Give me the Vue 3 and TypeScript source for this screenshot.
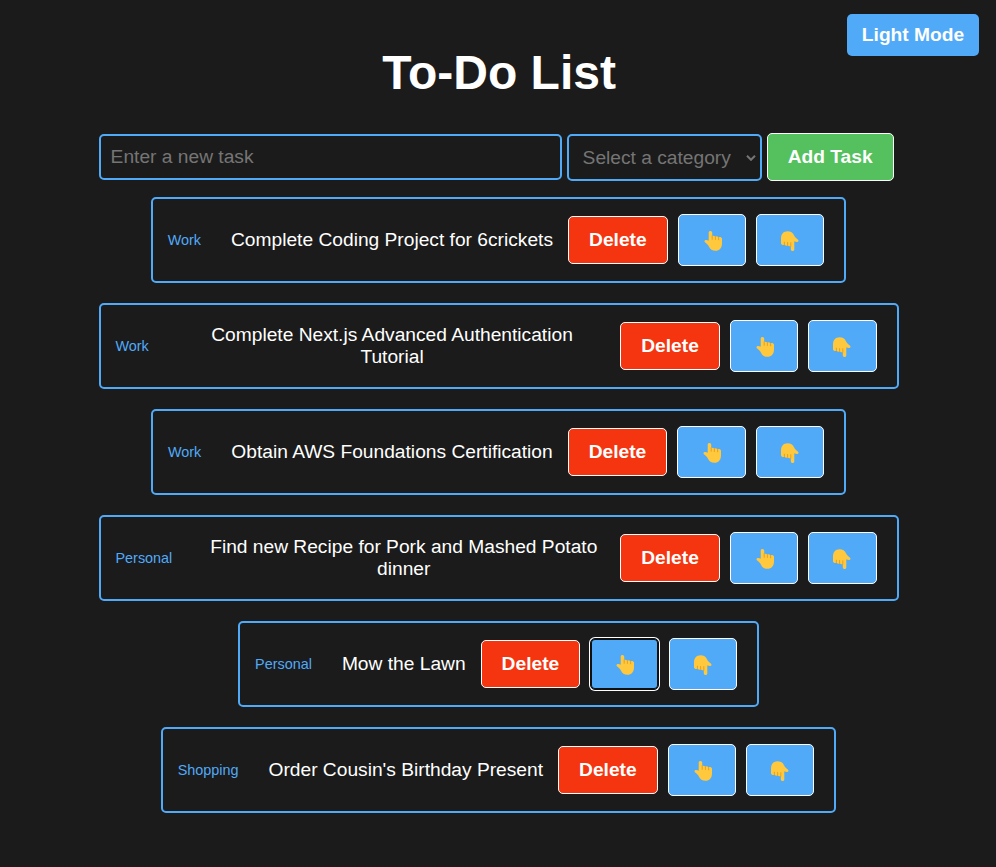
<script setup lang="ts">
import { ref } from 'vue'

interface Task {
  id: number
  category: string
  text: string
}

const newTask = ref('')
const category = ref('')
const focusedTask = ref(5)
const tasks = ref<Task[]>([
  { id: 1, category: 'Work', text: 'Complete Coding Project for 6crickets' },
  { id: 2, category: 'Work', text: 'Complete Next.js Advanced Authentication Tutorial' },
  { id: 3, category: 'Work', text: 'Obtain AWS Foundations Certification' },
  { id: 4, category: 'Personal', text: 'Find new Recipe for Pork and Mashed Potato dinner' },
  { id: 5, category: 'Personal', text: 'Mow the Lawn' },
  { id: 6, category: 'Shopping', text: "Order Cousin's Birthday Present" },
])

function addTask() {
  if (!newTask.value.trim() || !category.value) return
  tasks.value.push({ id: Date.now(), category: category.value, text: newTask.value })
  newTask.value = ''
}

function removeTask(index: number) {
  tasks.value.splice(index, 1)
}

function moveTask(index: number, step: number) {
  const target = index + step
  if (target < 0 || target >= tasks.value.length) return
  const [task] = tasks.value.splice(index, 1)
  tasks.value.splice(target, 0, task)
  focusedTask.value = task.id
}
</script>

<template>
  <div class="page">
    <button class="mode">Light Mode</button>
    <main class="todo">
      <h1>To-Do List</h1>
      <form class="entry" @submit.prevent="addTask">
        <input v-model="newTask" class="field" type="text" placeholder="Enter a new task" />
        <div class="select-wrap">
          <select v-model="category" class="select">
            <option value="">Select a category</option>
            <option>Work</option>
            <option>Personal</option>
            <option>Shopping</option>
          </select>
          <svg class="chevron" viewBox="0 0 10 6"><path d="M1 .8 5 4.8 9 .8" /></svg>
        </div>
        <button class="btn add">Add Task</button>
      </form>
      <ul class="tasks">
        <li v-for="(task, i) in tasks" :key="task.id" class="task">
          <span class="category">{{ task.category }}</span>
          <span class="text">{{ task.text }}</span>
          <button class="btn delete" @click="removeTask(i)">Delete</button>
          <button class="btn move" :class="{ focused: task.id === focusedTask }" aria-label="Move up" @click="moveTask(i, -1)">
            <svg class="hand up" viewBox="0 0 18 20">
              <path class="skin" d="M4.7 1.8C4.7.6 5.4 0 6.4 0s1.8.7 1.8 1.8v3.1c.9-.4 2.3-.2 3 .6 1.1-.5 2.5-.1 3 .6 1.7-.5 3.8 0 3.8 1.6v4.8c0 4.5-2.5 7.3-6.6 7.3-3.2 0-5.2-1.4-6.4-4.1-.8-1.8-2-2.7-3.8-4.2-1.1-.9-.9-2.2.3-2.5 1.3-.3 2.2.3 3.2.8z" />
              <path class="crease" d="M8.2 4.8v3.5M11.4 5.5v3M14.6 6.3v2.5" />
            </svg>
          </button>
          <button class="btn move" aria-label="Move down" @click="moveTask(i, 1)">
            <svg class="hand down" viewBox="0 0 18 20">
              <path class="skin" d="M4.7 1.8C4.7.6 5.4 0 6.4 0s1.8.7 1.8 1.8v3.1c.9-.4 2.3-.2 3 .6 1.1-.5 2.5-.1 3 .6 1.7-.5 3.8 0 3.8 1.6v4.8c0 4.5-2.5 7.3-6.6 7.3-3.2 0-5.2-1.4-6.4-4.1-.8-1.8-2-2.7-3.8-4.2-1.1-.9-.9-2.2.3-2.5 1.3-.3 2.2.3 3.2.8z" />
              <path class="crease" d="M8.2 4.8v3.5M11.4 5.5v3M14.6 6.3v2.5" />
            </svg>
          </button>
        </li>
      </ul>
    </main>
  </div>
</template>

<style>
body {
  margin: 0;
  background: #1b1b1b;
}
</style>

<style scoped>
.page {
  box-sizing: border-box;
  min-height: 867px;
  padding-left: 1.2px;
  background: #1b1b1b;
  color: #fff;
  font-family: 'Liberation Sans', Arial, sans-serif;
  font-size: 19.2px;
}

button,
input,
select {
  box-sizing: border-box;
  margin: 0;
  font: inherit;
}

.mode {
  position: absolute;
  top: 14px;
  right: 17px;
  width: 132px;
  height: 42px;
  padding: 0 0 1px;
  border: 0;
  border-radius: 5px;
  background: #51aaf8;
  color: #fff;
  font-weight: bold;
}

.todo {
  width: 800px;
  margin: 0 auto;
  padding-top: 45px;
}

h1 {
  margin: 0 0 33px;
  padding-left: 1px;
  font-size: 48px;
  line-height: 55px;
  text-align: center;
}

.entry {
  display: flex;
  align-items: center;
  gap: 5px;
  height: 48px;
}

.field {
  width: 463px;
  height: 46px;
  padding: 0 10px 1px;
  border: 2px solid #51aaf8;
  border-radius: 5px;
  background: transparent;
  color: #fff;
  outline: 0;
}

.field::placeholder {
  color: #757575;
}

.select-wrap {
  position: relative;
  box-sizing: border-box;
  width: 195px;
  height: 48px;
  padding-top: 1px;
}

.select {
  display: block;
  width: 195px;
  height: 47px;
  padding: 0 10px 0 14px;
  border: 2px solid #51aaf8;
  border-radius: 5px;
  background: transparent;
  color: #757575;
  appearance: none;
  outline: 0;
}

.chevron {
  position: absolute;
  top: 21.5px;
  right: 6px;
  width: 10px;
  height: 6px;
  fill: none;
  stroke: #757575;
  stroke-width: 2;
  pointer-events: none;
}

.btn {
  border: 1px solid #fff;
  border-radius: 5px;
  color: #fff;
  font-weight: bold;
}

.add {
  width: 127px;
  height: 48px;
  padding: 0 0 1px;
  background: #54c15e;
}

.tasks {
  display: flex;
  flex-direction: column;
  align-items: center;
  gap: 20px;
  margin: 16px 0 0;
  padding: 0;
  list-style: none;
}

.task {
  display: flex;
  align-items: center;
  box-sizing: border-box;
  max-width: 800px;
  height: 86px;
  padding: 0 20px 0 14.9px;
  border: 2px solid #51aaf8;
  border-radius: 5px;
}

.category {
  margin-right: 30px;
  color: #51aaf8;
  font-size: 14.4px;
}

.text {
  flex: 1;
  margin-right: 15px;
  padding-bottom: 1px;
  line-height: 22px;
  text-align: center;
}

.delete {
  flex: none;
  width: 99.6px;
  height: 48px;
  margin-right: 10px;
  padding: 0 0 1px;
  background: #f5350f;
}

.move {
  flex: none;
  display: flex;
  align-items: center;
  justify-content: center;
  width: 68.4px;
  height: 52px;
  padding: 0;
  background: #51aaf8;
}

.move + .move {
  margin-left: 10px;
}

.focused {
  border-color: #101010;
  box-shadow: 0 0 0 1px #fff, inset 0 0 0 1px #101010;
}

.hand {
  display: block;
  width: 18px;
  height: 20px;
  margin: 2px 0 0 2px;
}

.down {
  margin: 2px 0 0;
  transform: rotate(180deg);
}

.skin {
  fill: #ffc83d;
}

.crease {
  fill: none;
  stroke: #e39d1e;
  stroke-width: 0.9;
  stroke-linecap: round;
}
</style>
